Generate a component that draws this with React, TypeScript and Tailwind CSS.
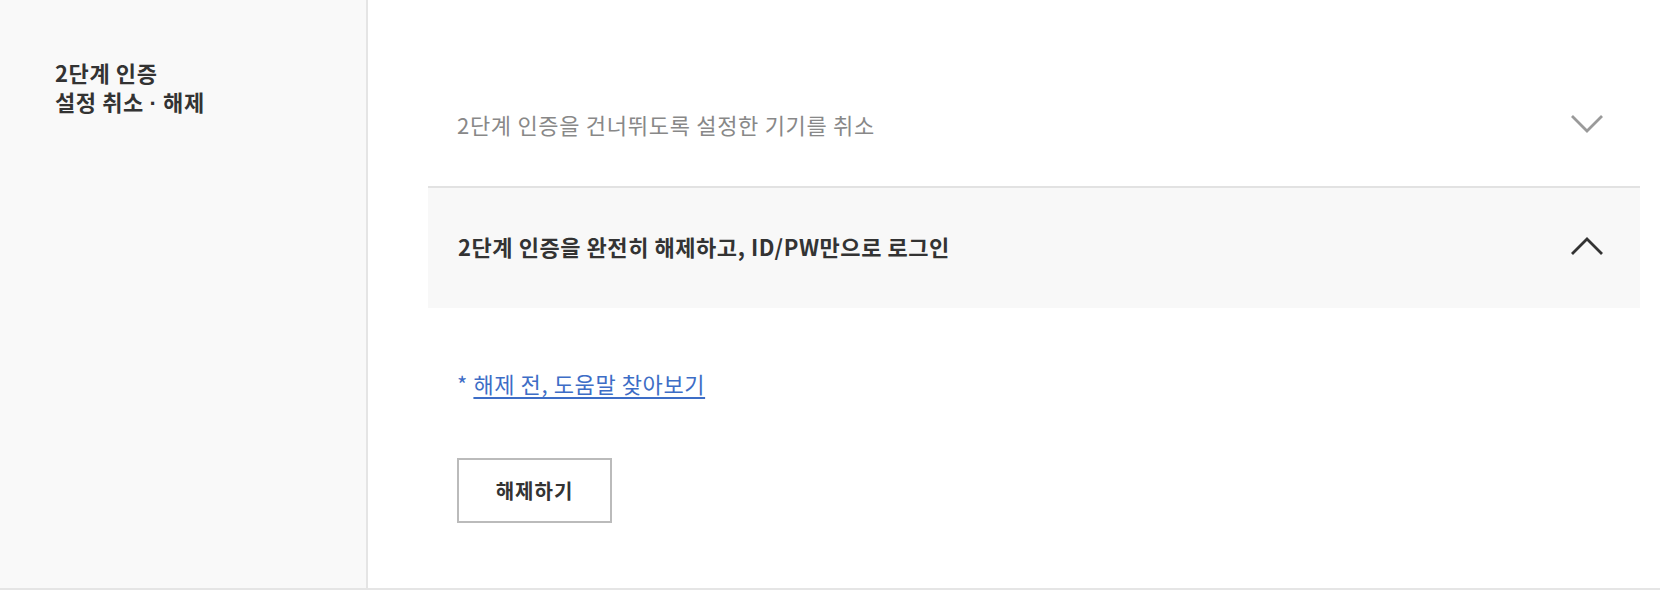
import React, { useState } from 'react';

const Chevron: React.FC<{ up?: boolean; color: string }> = ({ up, color }) => (
  <svg width="34" height="20" viewBox="0 0 34 20" fill="none">
    <polyline
      points={up ? '2,18 17,3 32,18' : '2,2 17,17 32,2'}
      stroke={color}
      strokeWidth="2.8"
      fill="none"
    />
  </svg>
);

const App: React.FC = () => {
  const [open, setOpen] = useState<number>(1);

  return (
    <div className="w-[1660px] min-h-[600px] bg-white font-['Noto_Sans_CJK_KR','Noto_Sans',sans-serif]">
      <div className="flex border-b-2 border-[#e5e5e5]">
        {/* left title column */}
        <div className="w-[368px] shrink-0 bg-[#f9f9f9] border-r-2 border-[#e5e5e5] pl-[55px] pt-[58px]">
          <h3 className="text-[22px] leading-[29px] tracking-[0.6px] font-bold text-[#333]">
            2단계 인증
            <br />
            설정 취소 <span className="font-['Liberation_Sans',sans-serif]">·</span> 해제
          </h3>
        </div>

        {/* accordion */}
        <div className="flex-1 pl-[60px] pr-[20px] pt-[66px]">
          <button
            type="button"
            onClick={() => setOpen(open === 0 ? -1 : 0)}
            className="w-full h-[122px] flex items-center justify-between border-b-2 border-[#e2e2e2] pl-[29px] pr-[36px] pb-[4px] text-left"
          >
            <span className="text-[22px] leading-[30px] tracking-[0.7px] text-[#888]">
              2단계 인증을 건너뛰도록 설정한 기기를 취소
            </span>
            <Chevron color="#9a9a9a" />
          </button>

          <button
            type="button"
            onClick={() => setOpen(open === 1 ? -1 : 1)}
            className="w-full h-[120px] flex items-center justify-between bg-[#f8f8f8] pl-[30px] pr-[36px] pb-[4px] text-left"
          >
            <span className="text-[22px] leading-[30px] tracking-[0.55px] font-bold text-[#333]">
              2단계 인증을 완전히 해제하고, ID/PW만으로 로그인
            </span>
            <Chevron up color="#333" />
          </button>

          {open === 1 && (
            <div className="pl-[29px] pt-[60px] pb-[65px]">
              <p className="text-[22px] leading-[30px] tracking-[0.6px] text-[#3d6dc6]">
                *{' '}
                <a href="#" className="underline underline-offset-[4px]">
                  해제 전, 도움말 찾아보기
                </a>
              </p>
              <button
                type="button"
                className="mt-[60px] w-[155px] h-[65px] border-2 border-[#bbb] bg-white text-[20px] tracking-[1px] font-bold text-[#333]"
              >
                해제하기
              </button>
            </div>
          )}
        </div>
      </div>
    </div>
  );
};

export default App;
